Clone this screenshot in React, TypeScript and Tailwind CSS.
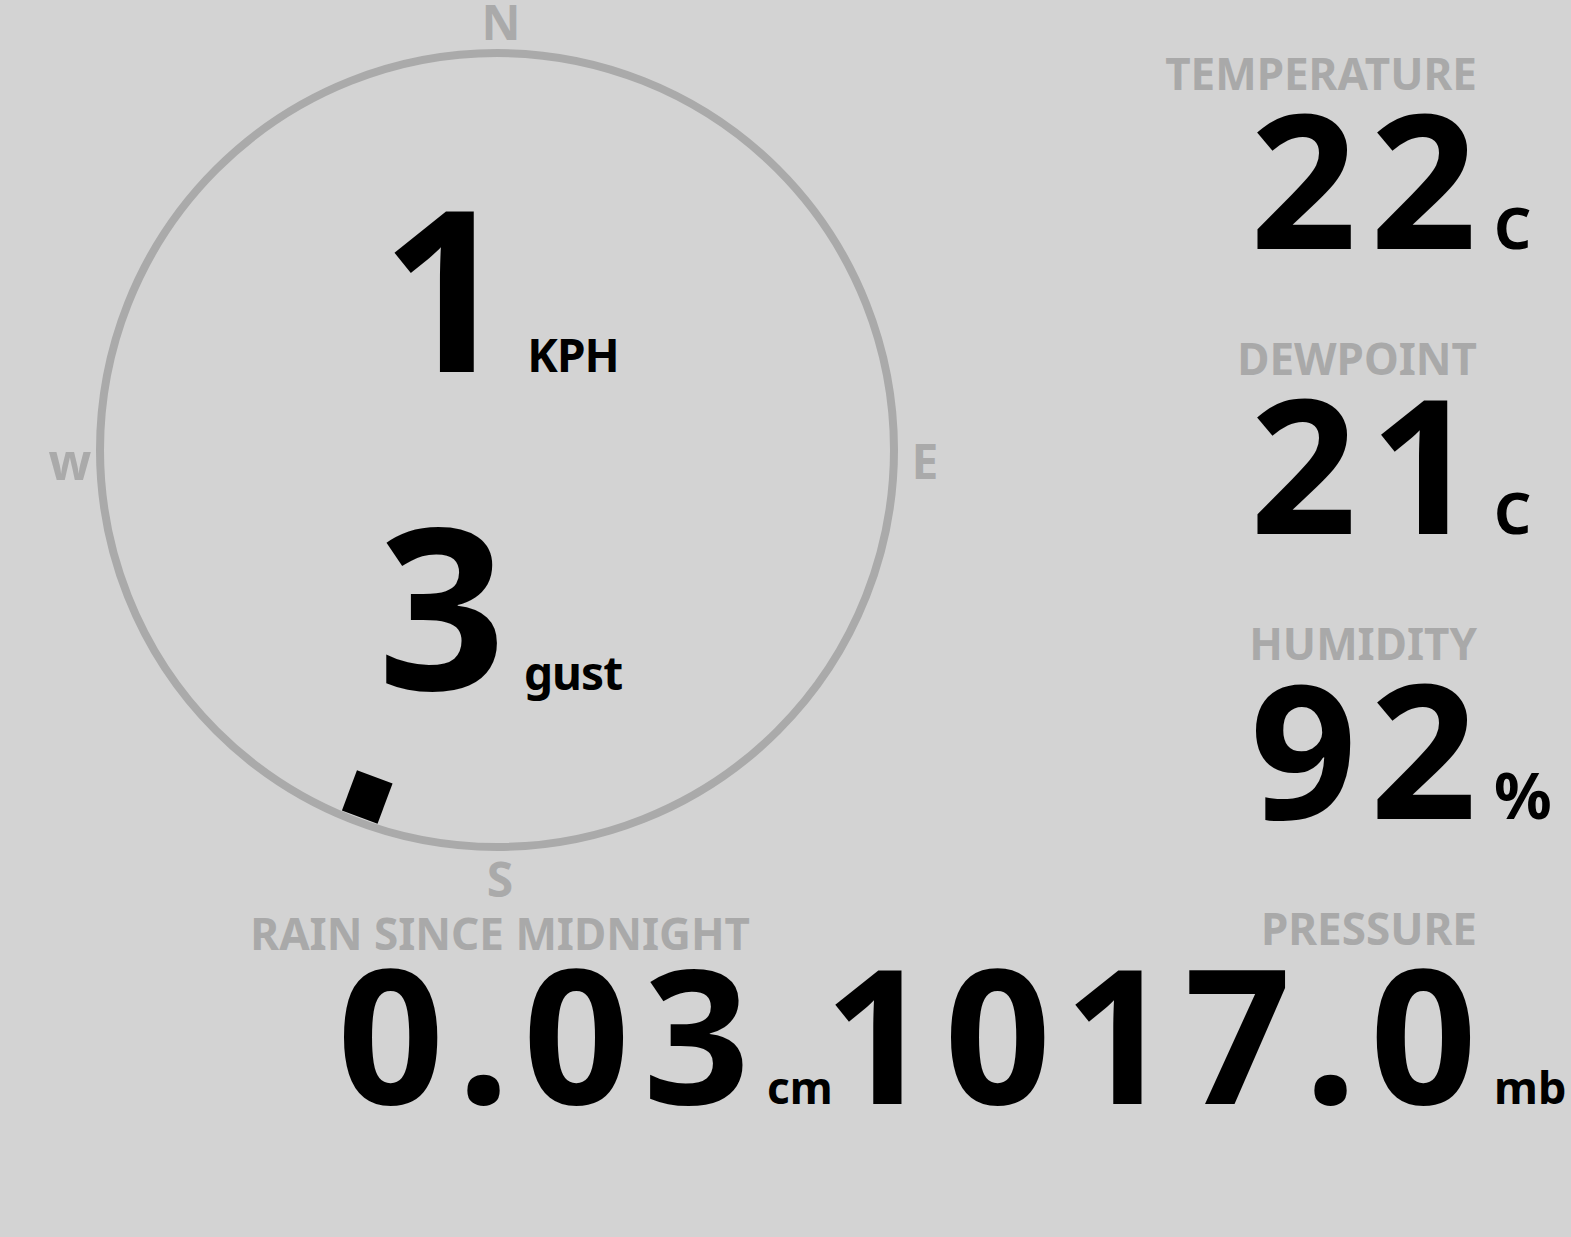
type StatProps = {
  label: string
  value: string
  unit: string
  unitClass?: string
  labelClass?: string
}

// label + big number, unit sits in its own column so labels line up with the number
function Stat({ label, value, unit, unitClass = 'text-[58px]', labelClass = '' }: StatProps) {
  return (
    <div className="grid shrink-0 grid-cols-[auto_66px] items-baseline gap-x-[17px]">
      <div className={`whitespace-nowrap text-right text-[44px] font-bold leading-none text-[#a9a9a9] ${labelClass}`}>
        {label}
      </div>
      <div />
      <div className="-mr-[0.07em] whitespace-nowrap text-right text-[187px] font-bold leading-[163px] tracking-[0.07em]">
        {value}
      </div>
      <div className={`whitespace-nowrap font-bold leading-[0.8] ${unitClass}`}>{unit}</div>
    </div>
  )
}

function Reading({ value, unit }: { value: string; unit: string }) {
  return (
    <div className="flex items-baseline gap-[18px]">
      <span className="text-[224px] font-bold leading-[0.8]">{value}</span>
      <span className="text-[46px] font-bold leading-[0.8] tracking-[-0.02em]">{unit}</span>
    </div>
  )
}

function Compass() {
  const bearing = 200.5
  return (
    <div className="relative h-[911px] w-[1000px]">
      <svg className="absolute inset-0" width="1000" height="911" viewBox="0 0 1000 911">
        <circle cx="497" cy="450" r="397" fill="none" stroke="#aaaaaa" strokeWidth="8" />
        <g transform={`rotate(${bearing} 497 450)`}>
          <rect x="478" y="58" width="38" height="43" fill="#000" />
        </g>
        <g fill="#aaaaaa" fontFamily="Noto Sans, sans-serif" fontWeight="700" fontSize="48" textAnchor="middle">
          <text x="501" y="40">N</text>
          <text x="925" y="479">E</text>
          <text x="500" y="897">S</text>
          <text x="70" y="480" fontSize="50">w</text>
        </g>
      </svg>
      <div className="relative flex flex-col items-center gap-[139px] pt-[196px]">
        <Reading value="1" unit="KPH" />
        <Reading value="3" unit="gust" />
      </div>
    </div>
  )
}

export default function App() {
  return (
    <div className="flex min-h-screen w-full overflow-hidden bg-[#d3d3d3] font-['Noto_Sans',sans-serif] text-black">
      <div className="flex w-[1000px] shrink-0 flex-col">
        <Compass />
        <div className="flex justify-end pr-[167px]">
          <Stat
            label="RAIN SINCE MIDNIGHT"
            value="0.03"
            unit="cm"
            unitClass="text-[44px]"
            labelClass="-mb-[5px]"
          />
        </div>
      </div>

      <div className="flex min-w-0 flex-1 flex-col items-end gap-[78px] pr-[11px] pt-[51px]">
        <Stat label="TEMPERATURE" value="22" unit="C" />
        <Stat label="DEWPOINT" value="21" unit="C" />
        <Stat label="HUMIDITY" value="92" unit="%" unitClass="text-[64px]" />
        <Stat label="PRESSURE" value="1017.0" unit="mb" unitClass="text-[45px]" />
      </div>
    </div>
  )
}
